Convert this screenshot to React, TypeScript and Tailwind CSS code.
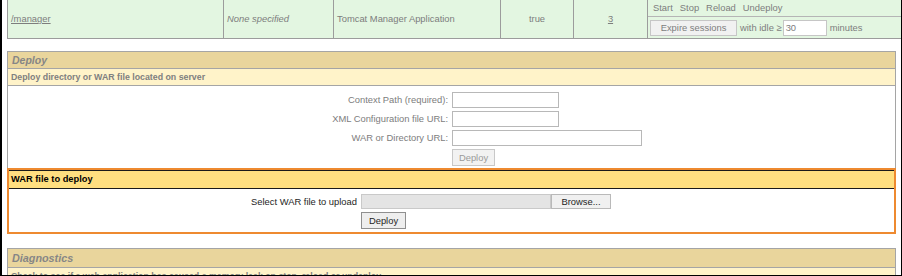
import React from 'react'

const gray = 'text-[#7d7d7d]'

const FormRow = ({ label, wide }: { label: string; wide?: boolean }) => (
  <div className="grid grid-cols-[440px_1fr] gap-x-[4px] items-center h-[16px]">
    <div className="text-right">{label}</div>
    <div>
      <div className={`h-[16px] bg-white border border-[#b8b8b8] ${wide ? 'w-[190px]' : 'w-[107px]'}`} />
    </div>
  </div>
)

export default function App() {
  return (
    <div
      className={`w-[902px] h-[276px] overflow-hidden bg-white border-l-2 border-r border-b border-black text-[9.4px] leading-none ${gray}`}
      style={{ fontFamily: '"Liberation Sans", Arial, sans-serif' }}
    >
      {/* Application row */}
      <div className="ml-[5px] flex h-[39px] bg-[#e3f6e1] border-l border-b border-[#9c9c9c]">
        <div className="w-[216px] border-r border-[#9c9c9c] flex items-center pl-[3px]">
          <span className="underline">/manager</span>
        </div>
        <div className="w-[110px] border-r border-[#9c9c9c] flex items-center pl-[3px] italic">None specified</div>
        <div className="w-[167px] border-r border-[#9c9c9c] flex items-center pl-[3px]">Tomcat Manager Application</div>
        <div className="w-[73px] border-r border-[#9c9c9c] flex items-center justify-center">true</div>
        <div className="w-[74px] border-r border-[#9c9c9c] flex items-center justify-center">
          <span className="underline">3</span>
        </div>
        <div className="flex-1 flex flex-col">
          <div className="h-[17px] border-b border-[#b5b5b5] flex items-center gap-[7px] pl-[5px]">
            <span>Start</span>
            <span>Stop</span>
            <span>Reload</span>
            <span>Undeploy</span>
          </div>
          <div className="flex-1 flex items-center pl-[2px]">
            <div className="h-[16px] w-[87px] border border-[#c6c6c6] bg-[#f1f1f1] flex items-center justify-center">
              Expire sessions
            </div>
            <span className="ml-[3px]">with idle ≥</span>
            <div className="ml-[1px] h-[16px] w-[44px] border border-[#c6c6c6] bg-white flex items-center pl-[2px]">30</div>
            <span className="ml-[3px]">minutes</span>
          </div>
        </div>
      </div>

      {/* Deploy */}
      <div className="ml-[5px] mt-[12px] w-[889px] border-x border-t border-[#a5a5a5]">
        <div className="h-[17px] bg-[#e9d59c] border-b border-[#a5a5a5] flex items-center pl-[4px] text-[10.5px] font-bold italic text-[#868686]">
          Deploy
        </div>
        <div className="h-[17px] bg-[#fff3c9] border-b border-[#a5a5a5] flex items-center pl-[3px] text-[8.8px] font-bold text-[#808080]">
          Deploy directory or WAR file located on server
        </div>
        <div className="flex flex-col gap-[3px] pt-[6px] pb-[2px]">
          <FormRow label="Context Path (required):" />
          <FormRow label="XML Configuration file URL:" />
          <FormRow label="WAR or Directory URL:" wide />
          <div className="grid grid-cols-[440px_1fr] gap-x-[4px]">
            <div />
            <div>
              <div className="h-[17px] w-[43px] border border-[#c8c8c8] bg-[#f2f2f2] flex items-center justify-center text-[#9a9a9a]">
                Deploy
              </div>
            </div>
          </div>
        </div>

        {/* WAR upload */}
        <div className="-mx-px border-2 border-[#ee8a30]">
          <div className="h-[19px] bg-[#ffdf80] border-y border-[#1a1a1a] flex items-center pl-[2px] font-bold text-[9.3px] text-black">
            WAR file to deploy
          </div>
          <div className="grid grid-cols-[348px_1fr] gap-x-[4px] gap-y-[3px] pt-[5px] pb-[3px] text-[#1e1e1e]">
            <div className="text-right h-[15px] flex items-center justify-end">Select WAR file to upload</div>
            <div className="flex h-[15px]">
              <div className="w-[190px] bg-[#e4e4e4] border border-[#c9c9c9]" />
              <div className="w-[60px] bg-[#f0f0f0] border border-[#b9b9b9] flex items-center justify-center">Browse...</div>
            </div>
            <div />
            <div>
              <div className="h-[17px] w-[45px] border border-[#8f8f8f] bg-[#eeeeee] flex items-center justify-center">Deploy</div>
            </div>
          </div>
        </div>
      </div>

      {/* Diagnostics */}
      <div className="ml-[5px] mt-[14px] w-[889px] border-x border-t border-[#a5a5a5]">
        <div className="h-[19px] bg-[#e9d59c] border-b border-[#a5a5a5] flex items-center pl-[4px] text-[10.8px] font-bold italic text-[#868686]">
          Diagnostics
        </div>
        <div className="h-[17px] bg-[#fff3c9] flex items-center pl-[3px] text-[8.8px] font-bold text-[#808080]">
          Check to see if a web application has caused a memory leak on stop, reload or undeploy
        </div>
      </div>
    </div>
  )
}
